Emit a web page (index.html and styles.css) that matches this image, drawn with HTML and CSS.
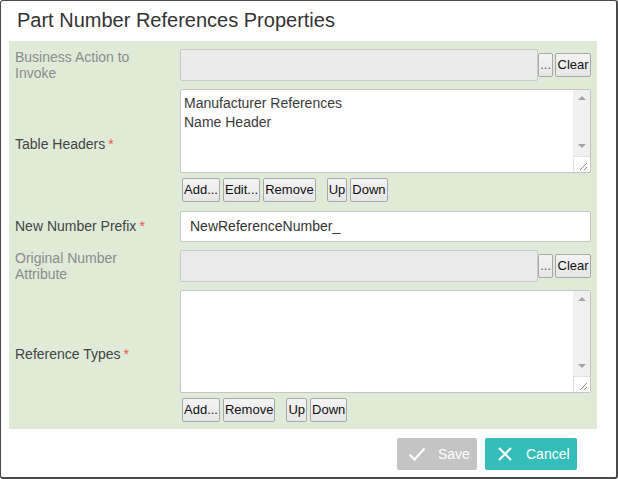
FILE: index.html
```html
<!DOCTYPE html>
<html>
<head>
<meta charset="utf-8">
<link rel="stylesheet" href="styles.css">
</head>
<body>
<div class="dialog">
  <div class="title">Part Number References Properties</div>
  <div class="panel">
    <div class="label disabled">Business Action to Invoke</div>
    <div class="field">
      <div class="picker">
        <div class="input disabled-input"></div>
        <button class="btn dots">...</button>
        <button class="btn">Clear</button>
      </div>
    </div>

    <div class="label lift">Table Headers<span class="req">*</span></div>
    <div class="field">
      <div class="listbox lb1">
        <div class="lb-content">
          <div class="item">Manufacturer References</div>
          <div class="item">Name Header</div>
        </div>
        <div class="scroll">
          <div class="track"><span class="arr up"></span><span class="arr down"></span></div>
          <div class="grip"><svg width="16" height="16" viewBox="0 0 16 16"><path d="M13 6 L6 13 M13 10 L10 13" stroke="#8a8a8a" stroke-width="1" fill="none"/></svg></div>
        </div>
      </div>
      <div class="btnrow">
        <button class="btn">Add...</button>
        <button class="btn">Edit...</button>
        <button class="btn">Remove</button>
        <button class="btn sep">Up</button>
        <button class="btn">Down</button>
      </div>
    </div>

    <div class="label">New Number Prefix<span class="req">*</span></div>
    <div class="field">
      <div class="input text-input">NewReferenceNumber_</div>
    </div>

    <div class="label disabled">Original Number Attribute</div>
    <div class="field">
      <div class="picker">
        <div class="input disabled-input"></div>
        <button class="btn dots">...</button>
        <button class="btn">Clear</button>
      </div>
    </div>

    <div class="label lift">Reference Types<span class="req">*</span></div>
    <div class="field">
      <div class="listbox lb2">
        <div class="lb-content"></div>
        <div class="scroll">
          <div class="track"><span class="arr up"></span><span class="arr down"></span></div>
          <div class="grip"><svg width="16" height="16" viewBox="0 0 16 16"><path d="M13 6 L6 13 M13 10 L10 13" stroke="#8a8a8a" stroke-width="1" fill="none"/></svg></div>
        </div>
      </div>
      <div class="btnrow">
        <button class="btn">Add...</button>
        <button class="btn">Remove</button>
        <button class="btn sep">Up</button>
        <button class="btn">Down</button>
      </div>
    </div>
  </div>
  <div class="footer">
    <button class="action save">
      <svg width="18" height="14" viewBox="0 0 18 14"><path d="M1.5 7.5 L6.5 12.5 L16.5 1.5" stroke="#fff" stroke-width="2.2" fill="none"/></svg>
      <span>Save</span>
    </button>
    <button class="action cancel">
      <svg width="14" height="14" viewBox="0 0 14 14"><path d="M1 1 L13 13 M13 1 L1 13" stroke="#fff" stroke-width="2.2" fill="none"/></svg>
      <span>Cancel</span>
    </button>
  </div>
</div>
</body>
</html>
```
FILE: styles.css
```css
html, body {
  margin: 0;
  padding: 0;
  background: #ffffff;
}
body {
  font-family: "Liberation Sans", Arial, sans-serif;
}
.dialog {
  box-sizing: border-box;
  width: 618px;
  height: 479px;
  border: 1px solid #4a4a4a;
  border-right-width: 2px;
  border-bottom-width: 2px;
  border-radius: 3px;
  background: #fff;
}
.title {
  height: 40px;
  box-sizing: border-box;
  padding: 6px 0 0 16px;
  font-size: 20px;
  line-height: 26px;
  color: #333;
}
.panel {
  margin-left: 8px;
  width: 588px;
  box-sizing: border-box;
  background: #dfebd7;
  padding: 8px 6px 7px 6px;
  display: grid;
  grid-template-columns: 165px 411px;
  row-gap: 8px;
}
.label {
  font-size: 14px;
  line-height: 16px;
  color: #444;
  align-self: center;
  padding-right: 30px;
}
.label.lift {
  margin-top: -4px;
}
.label.disabled {
  color: #8c8c8c;
}
.req {
  color: #f0524b;
  margin-left: 3px;
}
.field {
  display: flex;
  flex-direction: column;
}
.picker {
  display: flex;
  align-items: center;
  height: 32px;
}
.input {
  box-sizing: border-box;
  height: 32px;
  border: 1px solid #c4c4c4;
  border-radius: 2px;
  font-size: 14px;
}
.disabled-input {
  width: 359px;
  background: #ebebeb;
  border-color: #c9c9c9;
}
.text-input {
  width: 411px;
  height: 31px;
  margin-top: 1px;
  background: #fff;
  color: #333;
  padding-left: 9px;
  line-height: 29px;
}
.btn {
  box-sizing: border-box;
  height: 24px;
  padding: 0 1px;
  margin: 0;
  border: 1px solid #a8a8a8;
  border-radius: 2px;
  background: linear-gradient(#f4f4f4, #e6e6e6);
  font-family: "Liberation Sans", Arial, sans-serif;
  font-size: 13px;
  color: #111;
  line-height: 22px;
}
.picker .dots {
  width: 15px;
  padding: 0;
  margin-left: 0;
  color: #555;
}
.picker .btn + .btn {
  margin-left: 2px;
  width: 36px;
}
.listbox {
  box-sizing: border-box;
  width: 411px;
  border: 1px solid #c4c4c4;
  border-radius: 2px;
  background: #fff;
  display: flex;
}
.lb1 { height: 84px; }
.lb2 { height: 103px; }
.lb-content {
  flex: 1;
  padding: 4px 3px;
  font-size: 14px;
  line-height: 19px;
  color: #3a3a3a;
}
.scroll {
  width: 17px;
  display: flex;
  flex-direction: column;
}
.track {
  flex: 1;
  background: #f0f0f0;
  display: flex;
  flex-direction: column;
  justify-content: space-between;
  align-items: center;
  padding: 6px 0 8px 0;
}
.arr {
  width: 0;
  height: 0;
  border-left: 4px solid transparent;
  border-right: 4px solid transparent;
}
.arr.up { border-bottom: 4px solid #a3a3a3; }
.arr.down { border-top: 4px solid #a3a3a3; }
.grip {
  height: 16px;
  background: #fff;
  border-left: 1px solid #e2e2e2;
  border-top: 1px solid #e2e2e2;
  box-sizing: border-box;
}
.grip svg { display: block; }
.btnrow {
  display: flex;
  gap: 3px;
  margin-top: 5px;
  padding-left: 2px;
}
.btnrow .sep {
  margin-left: 8px;
}
.footer {
  display: flex;
  justify-content: flex-end;
  gap: 8px;
  padding: 9px 39px 0 0;
}
.action {
  box-sizing: border-box;
  height: 32px;
  border: none;
  border-radius: 2px;
  display: flex;
  align-items: center;
  color: #fff;
  font-family: "Liberation Sans", Arial, sans-serif;
  font-size: 14px;
  margin: 0;
}
.action.save {
  width: 80px;
  background: #c4c4c4;
  padding-left: 11px;
  gap: 12px;
}
.action.cancel {
  width: 92px;
  background: #34bdb9;
  padding-left: 13px;
  gap: 14px;
}
.action svg { display: block; }
```
